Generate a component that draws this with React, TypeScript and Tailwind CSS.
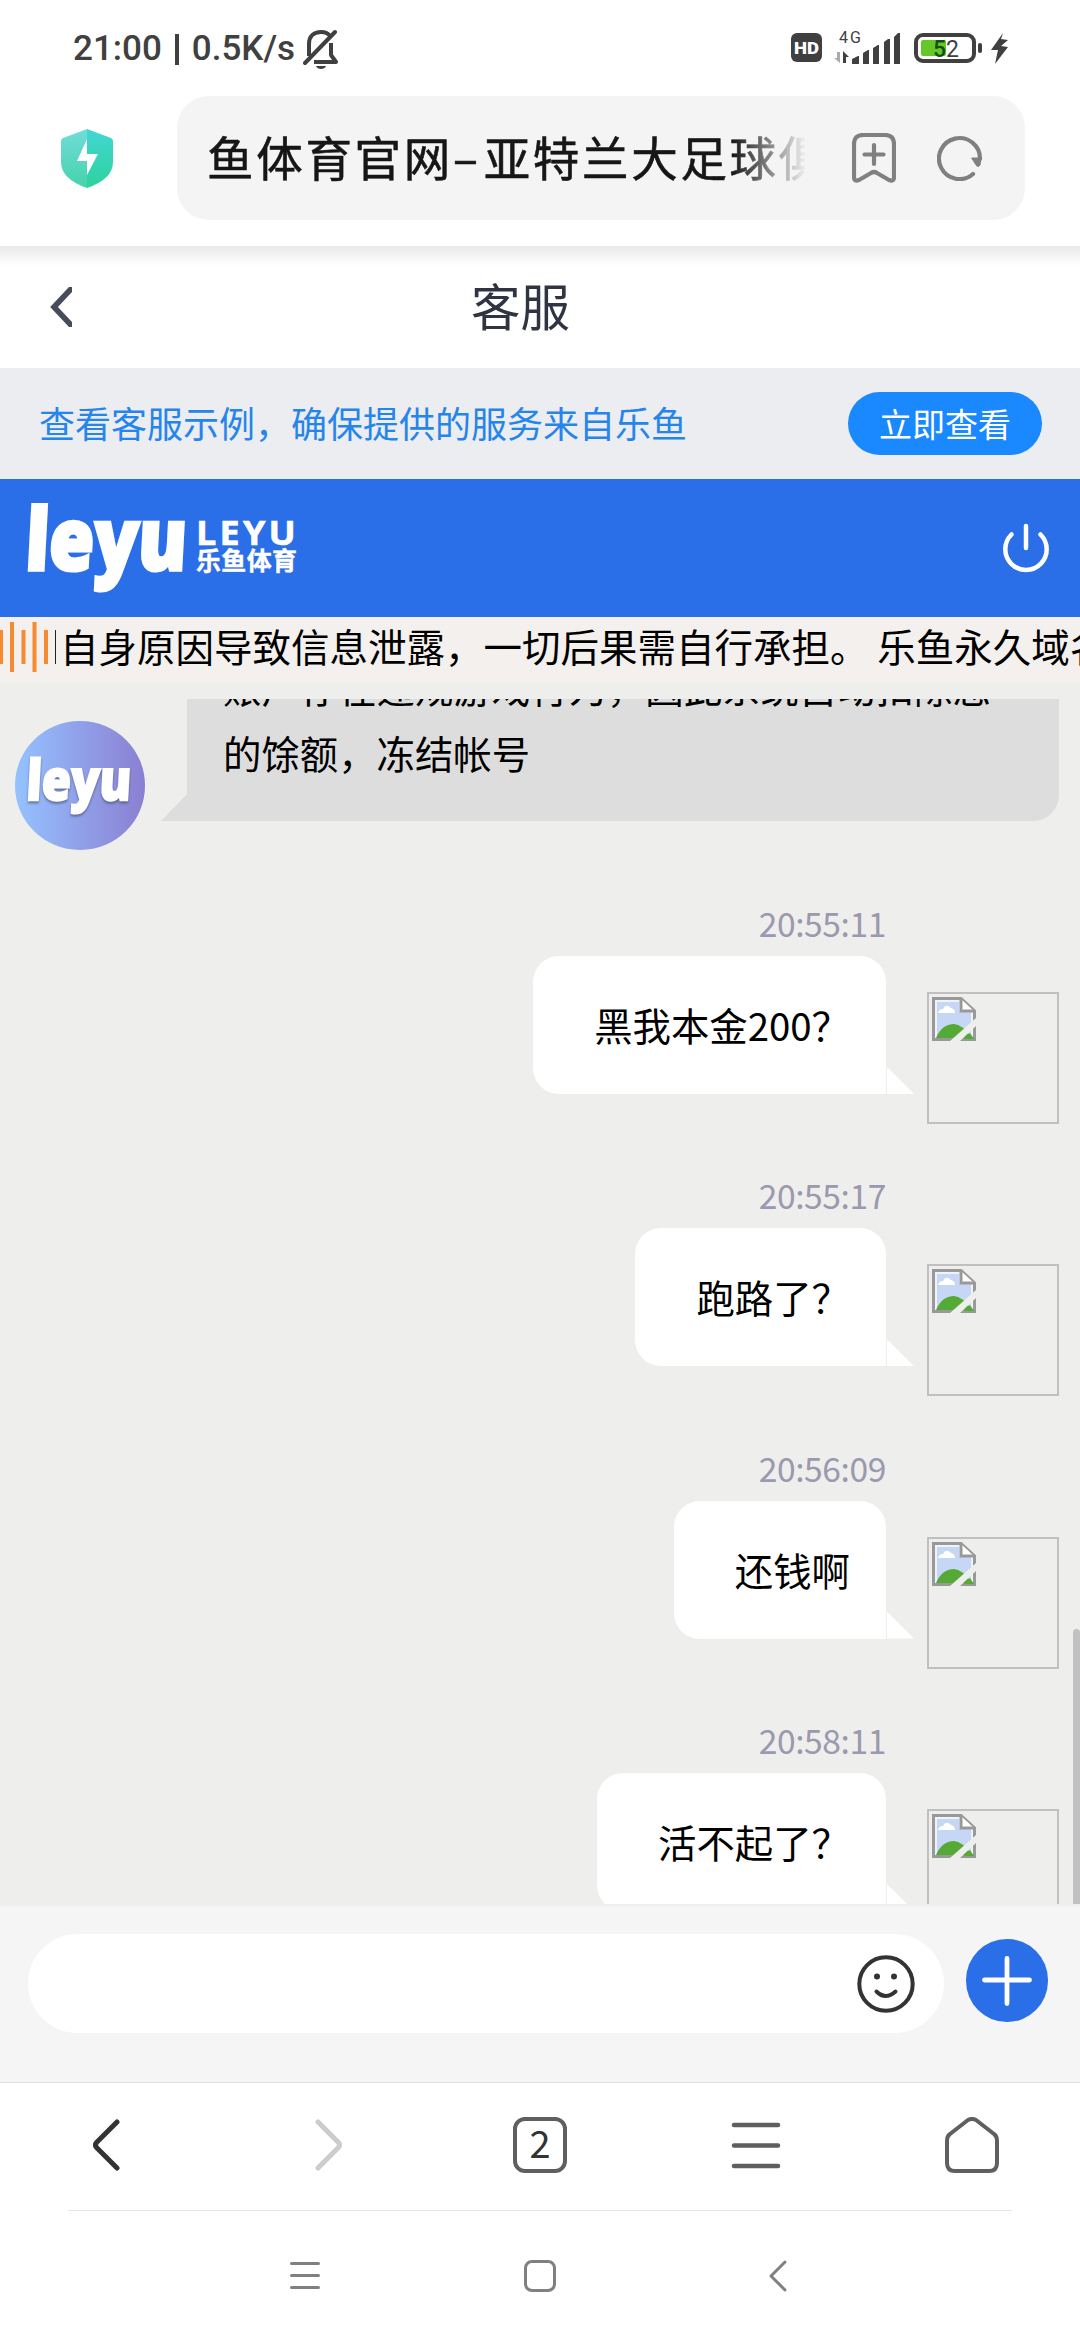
import type { ReactNode } from "react";

const messages = [
  { time: "20:55:11", text: "黑我本金200？" },
  { time: "20:55:17", text: "跑路了？" },
  { time: "20:56:09", text: "还钱啊" },
  { time: "20:58:11", text: "活不起了？" },
];

function StatusBar() {
  return (
    <div className="flex h-24 items-center justify-between pr-[71px] pl-[73px] text-[#404040]">
      <div className="flex items-center pt-0.5 font-['Roboto',sans-serif] text-[35px] font-medium">
        <span>21:00</span>
        <span className="mr-[13px] ml-[13px] h-[31px] w-1 bg-[#404040]" />
        <span>0.5K/s</span>
        <svg className="ml-2 h-10 w-9" viewBox="0 0 36 40" fill="none" stroke="currentColor" strokeWidth="4">
          <path d="M6 27V15C6 7 11 3 18 3c4 0 7 1 9 4M11 33h22l-5-7V14" strokeLinejoin="round" />
          <path d="M2 34 32 3" strokeLinecap="round" />
          <path d="M13 37h10c-1 4-9 4-10 0z" fill="currentColor" stroke="none" />
        </svg>
      </div>

      <svg className="h-10 w-[218px]" viewBox="791 28 218 40" fill="#404040" fontFamily="Roboto, sans-serif">
        <rect x="791" y="33" width="31" height="29" rx="6" />
        <text x="794" y="54" fontSize="17" fontWeight="900" fill="#fff" textLength="25" lengthAdjust="spacingAndGlyphs">
          HD
        </text>
        <text x="839" y="43" fontSize="16" textLength="22">4G</text>
        <path d="M840 52v11l-6-5h3v-6z" fill="#aaa" />
        <path d="M843 63V51l6 6h-3v6z" />
        <path d="M852 64v-5l6-3h1v8zM863 64V53l5-3h1v14zM873 64V48l5-3h1v19zM884 64V42l4-3h2v25zM894 64V37l4-4h2v31z" />
        <rect x="916" y="35" width="58" height="26" rx="7" fill="none" stroke="#404040" strokeWidth="4" />
        <rect x="921" y="40" width="25" height="16" rx="2" fill="#64c828" />
        <text x="933" y="57" fontSize="23" fontWeight="500" fill="#145014">5</text>
        <text x="946" y="57" fontSize="23">2</text>
        <rect x="978" y="43" width="4" height="10" rx="2" />
        <path d="M1003 33 991 50h7l-3 14 13-17-7-1 7-6-7-1z" />
      </svg>
    </div>
  );
}

function AddressBar() {
  return (
    <div className="flex h-[150px] items-start pl-[61px]">
      <svg className="mt-[33px] h-[59px] w-[52px]" viewBox="0 0 52 59">
        <defs>
          <linearGradient id="shieldLeft" x2="0" y2="1">
            <stop stopColor="#72dcd8" />
            <stop offset="1" stopColor="#44d3ab" />
          </linearGradient>
          <linearGradient id="shieldRight" x2="0" y2="1">
            <stop stopColor="#43d6d5" />
            <stop offset="1" stopColor="#2cd39c" />
          </linearGradient>
        </defs>
        <path d="M26 0 2 9Q0 10 0 12v21q0 17 26 26z" fill="url(#shieldLeft)" />
        <path d="m26 0 24 9q2 1 2 3v21q0 17-26 26z" fill="url(#shieldRight)" />
        <path d="M26 10 16 32h10v14l11-21H26z" fill="#fff" />
      </svg>
      <div className="ml-16 flex h-[124px] w-[848px] items-center rounded-[32px] bg-[#f4f4f4] pl-[30px]">
        <div className="w-[598px] overflow-hidden pb-1 text-[46.500px] tracking-[2.700px] whitespace-nowrap text-[#161616] [-webkit-text-stroke:0.600px_#161616] [mask-image:linear-gradient(to_right,#000_525px,transparent_600px)]">
          鱼体育官网<span className="mr-[3px]">–</span>亚特兰大足球俱
        </div>
        <svg className="ml-[47px] h-[50px] w-11" viewBox="0 0 44 50" fill="none" stroke="#808080" strokeWidth="4.2" strokeLinecap="round" strokeLinejoin="round">
          <path d="M2 11Q2 2 11 2h22q9 0 9 9v33q0 5-5 3L25 40q-3-2-6 0L7 47q-5 2-5-3zM22 12v19M12.500 21.500h19" />
        </svg>
        <svg className="ml-[41px] h-[46px] w-[46px]" viewBox="0 0 46 46" fill="none" stroke="#808080" strokeWidth="4.200" strokeLinecap="round">
          <path d="M36 39A20.500 20.500 0 1 1 43 24" />
          <path d="M35 23h9l-1 7q-2 3-4 0z" fill="#808080" strokeWidth="1" />
        </svg>
      </div>
    </div>
  );
}

function PageTitle() {
  return (
    <div className="flex h-[122px] items-center bg-gradient-to-b from-[#e9e9e9] to-white to-[20px] pl-[50px]">
      <svg className="h-10 w-[22px]" viewBox="0 0 22 40" fill="none" stroke="#464c5b" strokeWidth="5.600">
        <path d="M21 2 4 20l17 18" strokeLinecap="round" />
      </svg>
      <h1 className="ml-[399px] pb-[5px] text-[49.500px] leading-none text-[#303442]">客服</h1>
    </div>
  );
}

function Notice() {
  return (
    <div className="flex h-[111px] items-center justify-between bg-[#ebedf1] pr-[38px] pl-[39px]">
      <span className="pb-[3px] text-[36px] text-[#2585ea]">查看客服示例，确保提供的服务来自乐鱼</span>
      <button className="h-[63px] w-[194px] rounded-full bg-[#1a88ff] text-[33px] text-white">立即查看</button>
    </div>
  );
}

function Wordmark({ className }: { className: string }) {
  return (
    <svg className={className} viewBox="0 0 160 88" overflow="visible" fill="#fff" stroke="#fff" strokeWidth="3.500">
      <text
        transform="skewX(-3)"
        x="0"
        y="66"
        fontFamily="Open Sans, sans-serif"
        fontSize="86"
        fontWeight="800"
        textLength="161"
        lengthAdjust="spacingAndGlyphs"
      >
        leyu
      </text>
    </svg>
  );
}

function BrandHeader() {
  return (
    <header className="flex h-[138px] items-center justify-between bg-[#2a6ee8] pr-[31px] pl-7">
      <div className="flex items-center text-white">
        <Wordmark className="h-[88px] w-40" />
        <svg className="ml-2 h-[88px] w-[101px]" viewBox="0 0 101 88" overflow="visible" fill="#fff" stroke="#fff" fontWeight="bold">
          <text y="41" fontFamily="Open Sans, sans-serif" fontSize="34" letterSpacing="3" textLength="103" lengthAdjust="spacingAndGlyphs" strokeWidth="0.600">
            LEYU
          </text>
          <text y="66" fontFamily="Noto Sans CJK SC, sans-serif" fontSize="25" textLength="101" strokeWidth="0.400">
            乐鱼体育
          </text>
        </svg>
      </div>
      <svg className="h-[50px] w-[46px]" viewBox="0 0 46 50" fill="none" stroke="#fff" strokeWidth="4.500" strokeLinecap="round">
        <path d="M23 3v22M8.500 11.500a20.700 20.700 0 1 0 29 0" />
      </svg>
    </header>
  );
}

function Marquee() {
  return (
    <div className="flex h-[66px] items-center overflow-hidden bg-[#f4f0ed]">
      <svg className="mb-1.5 h-[50px] w-[60px] shrink-0" viewBox="0 0 60 50">
        <path d="M1 8v34M12 0v50M23.500 8v34M34.500 0v50M46 8v34" stroke="#f58a30" strokeWidth="4" />
        <path d="M55.500 8v34" stroke="#222" />
      </svg>
      <span className="pb-2.5 text-[38.500px] leading-[56px] whitespace-nowrap text-black">
        自身原因导致信息泄露，一切后果需自行承担。 乐鱼永久域名
      </span>
    </div>
  );
}

function BrokenImage() {
  return (
    <div className="mt-[36px] ml-[41px] h-[132px] w-[132px] shrink-0 border-2 border-[#c0c0c0] p-[3px]">
      <svg className="h-11 w-11" viewBox="0 0 44 44">
        <path d="M1.500 1.500H29L42.500 14v28.500h-41z" fill="#c5d7f5" stroke="#999" strokeWidth="3" />
        <path d="M4 4h24v10h12v26H4z" fill="none" stroke="#eef3fc" strokeWidth="2" />
        <path d="M6 16q1-4 5-4 3-6 8-1 4 1 4 5z" fill="#fff" />
        <path d="M4 41q6-14 18-14 8 0 18 14z" fill="#55aa35" />
        <path d="M29 2v12h13" fill="#fff" stroke="#999" strokeWidth="3" />
        <path d="M44 21v8L28 44H18z" fill="#eeeeec" />
        <path d="M32 42l6-6 4 6z" fill="#55aa35" />
      </svg>
    </div>
  );
}

function Message({ time, text }: { time: string; text: string }) {
  return (
    <div className="flex h-[272.3px] shrink-0 justify-end pr-[21px]">
      <div className="flex flex-col items-end">
        <time className="mb-[9px] h-12 text-[33.600px] leading-[48px] tracking-[-0.400px] text-[#9a99ae]">{time}</time>
        <div className="relative flex h-[138px] items-center rounded-[26px] rounded-br-none bg-white pr-9 pl-[61px] text-[38.4px] text-black">
          {text}
          <span className="absolute bottom-0 left-[calc(100%+1px)] h-[27px] w-[27px] bg-white [clip-path:polygon(0_0,100%_100%,0_100%)]" />
        </div>
      </div>
      <div className="pt-[57px]">
        <BrokenImage />
      </div>
    </div>
  );
}

function Chat() {
  return (
    <main className="h-[1223px] bg-[#eeeeec] pt-4">
      <div className="relative flex h-[1205px] flex-col overflow-hidden">
        <div className="flex h-[200px] shrink-0 items-start">
          <div className="mt-[22px] ml-[15px] flex h-[129px] w-[130px] items-center justify-center rounded-full bg-gradient-to-r from-[#94c2ff] to-[#8a7fd2]">
            <Wordmark className="h-[58px] w-[104px] drop-shadow-[0_2px_1px_rgba(60,70,110,0.6)]" />
          </div>
          <div className="relative ml-[42px] flex h-[122px] w-[872px] items-end rounded-br-[26px] bg-[#ddd]">
            <p className="pb-9 pl-9 text-[38.4px] leading-[66px] whitespace-nowrap text-black">
              账户存在违规游戏行为，因此系统自动扣除您
              <br />
              的馀额，冻结帐号
            </p>
            <span className="absolute right-full bottom-0 h-[27px] w-[26px] bg-[#ddd] [clip-path:polygon(100%_0,100%_100%,0_100%)]" />
          </div>
        </div>
        {messages.map((message) => (
          <Message key={message.time} {...message} />
        ))}
        <span className="absolute right-0 bottom-0 h-[275px] w-[7px] rounded-t-full bg-[#c1c1c1]" />
      </div>
    </main>
  );
}

function Composer() {
  return (
    <div className="flex h-[176px] items-start bg-[#f5f5f5] pt-7 pl-7">
      <div className="flex h-[99px] w-[916px] items-center justify-end rounded-full bg-white pr-[29px]">
        <svg className="h-[58px] w-[58px]" viewBox="0 0 58 58" fill="none" stroke="#333" strokeWidth="4" strokeLinecap="round">
          <circle cx="29" cy="29" r="26.700" />
          <path d="M19.500 36.500q9 9 19 0" />
          <circle cx="20" cy="21.500" r="3" fill="#333" stroke="none" />
          <circle cx="37" cy="21.500" r="3" fill="#333" stroke="none" />
        </svg>
      </div>
      <button className="mt-[5px] ml-[22px] flex h-[83px] w-[82px] items-center justify-center rounded-full bg-[#2a6ee8]">
        <svg className="h-[50px] w-[50px]" viewBox="0 0 50 50" stroke="#fff" strokeWidth="4.800" strokeLinecap="round">
          <path d="M25 2.500v45M2.500 24h45" />
        </svg>
      </button>
    </div>
  );
}

function Stroke({ className, children }: { className: string; children: ReactNode }) {
  return (
    <svg className={className} fill="none" stroke="currentColor" strokeLinecap="round" strokeLinejoin="round">
      {children}
    </svg>
  );
}

function BrowserNav() {
  return (
    <nav className="flex h-[128px] items-center border-t border-[#e0e0e0] pb-[3px] pl-[93px] text-[#5f5f5f]">
      <Stroke className="h-[52px] w-[27px] text-[#333]">
        <path d="M24 3 4 23q-3 3 0 6l20 20" strokeWidth="5" />
      </Stroke>
      <Stroke className="ml-[195px] h-[52px] w-[27px] text-[#ccc]">
        <path d="m3 3 20 20q3 3 0 6L3 49" strokeWidth="5" />
      </Stroke>
      <div className="ml-[171px] flex h-14 w-[54px] items-center justify-center rounded-[12px] border-4 border-[#5f5f5f] pb-1.5 text-[38px] leading-none text-[#333]">
        2
      </div>
      <Stroke className="ml-[164px] h-12 w-[50px]">
        <path d="M3 4h44M3 24.500h44M3 45h44" strokeWidth="4.600" />
      </Stroke>
      <Stroke className="ml-[164px] h-14 w-[54px]">
        <path d="M23 3q4-2 8 0l18 14q3 2 3 7v22q0 8-8 8H10q-8 0-8-8V24q0-5 3-7z" strokeWidth="4" />
      </Stroke>
    </nav>
  );
}

function SystemNav() {
  return (
    <div className="mx-[68px] flex h-[130px] items-center border-t border-[#e5e5e5] pl-[222px] text-[#808080]">
      <Stroke className="h-8 w-[30px]">
        <path d="M1.500 3.500h27M1.500 15.500h27M1.500 27.500h27" strokeWidth="3" />
      </Stroke>
      <span className="ml-[204px] h-8 w-8 rounded-[8px] border-3 border-[#808080]" />
      <Stroke className="ml-[213px] h-8 w-[18px]">
        <path d="M16 2 2 16l14 14" strokeWidth="3" />
      </Stroke>
    </div>
  );
}

export default function App() {
  return (
    <div className="h-[2340px] w-[1080px] overflow-hidden bg-white font-['Noto_Sans_CJK_SC',sans-serif]">
      <StatusBar />
      <AddressBar />
      <PageTitle />
      <Notice />
      <BrandHeader />
      <Marquee />
      <Chat />
      <Composer />
      <BrowserNav />
      <SystemNav />
    </div>
  );
}
